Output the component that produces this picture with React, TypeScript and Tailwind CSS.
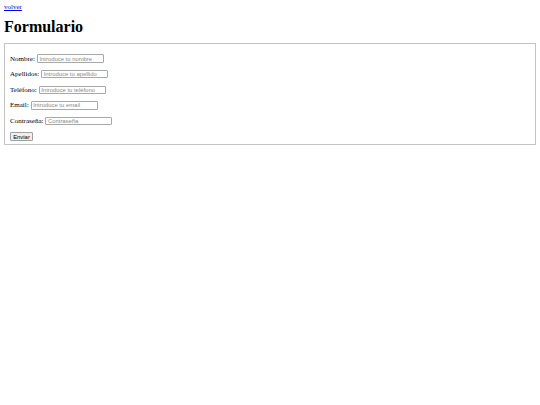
const fields = [
  { label: "Nombre:", placeholder: "Introduce tu nombre", type: "text" },
  { label: "Apellidos:", placeholder: "Introduce tu apellido", type: "text" },
  { label: "Teléfono:", placeholder: "Introduce tu teléfono", type: "tel" },
  { label: "Email:", placeholder: "Introduce tu email", type: "email" },
  { label: "Contraseña:", placeholder: "Contraseña", type: "password" },
]

export default function App() {
  return (
    <div className="min-h-screen bg-white px-[4px] pt-[3.3px] font-['Liberation_Serif',serif] text-[7px] text-black">
      <a href="#" className="block leading-[8px] text-[#0000ee] underline">
        volver
      </a>

      <h1 className="mt-[6.3px] mb-[7.8px] text-[16px] font-bold leading-[18px]">
        Formulario
      </h1>

      <form className="flex flex-col gap-[7px] border border-[#c4c4c4] px-[5px] pt-[10px] pb-[3px]">
        {fields.map((f) => (
          <div key={f.label} className="flex h-[8.6px] items-center gap-[2px]">
            <label className="leading-[8px]">{f.label}</label>
            <input
              type={f.type}
              placeholder={f.placeholder}
              className="h-[8.4px] w-[67px] rounded-[1px] border border-[#a8a8a8] bg-white px-[1.5px] font-['Liberation_Sans',sans-serif] text-[5.9px] leading-[6px] placeholder:text-[#8a8a8a]"
            />
          </div>
        ))}
        <div className="flex">
          <button
            type="submit"
            className="h-[8.5px] w-[23px] rounded-[1px] border border-[#a0a0a0] bg-[#efefef] font-['Liberation_Sans',sans-serif] text-[5.9px] leading-[6px] text-black"
          >
            Enviar
          </button>
        </div>
      </form>
    </div>
  )
}
